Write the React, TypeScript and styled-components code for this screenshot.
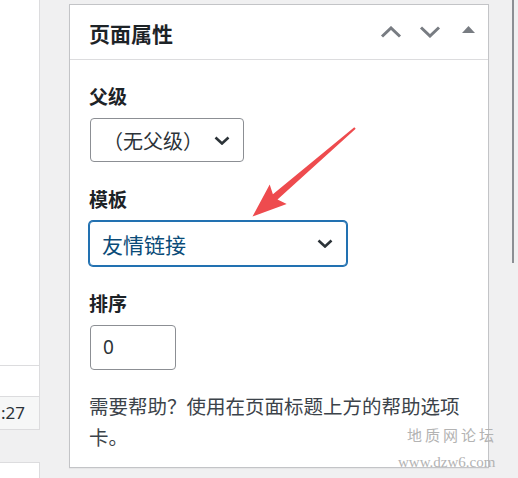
import styled, { createGlobalStyle } from "styled-components";

const GlobalStyle = createGlobalStyle`
  html, body {
    margin: 0;
    padding: 0;
    background: #f0f0f1;
  }
  body {
    font-family: "Noto Sans CJK SC", "Noto Sans", sans-serif;
    color: #1d2327;
  }
`;

const Screen = styled.div`
  position: relative;
  display: flex;
  width: 518px;
  height: 478px;
  overflow: hidden;
  background: #f0f0f1;
`;

/* left: the edge of the post list */
const LeftColumn = styled.div`
  width: 40px;
  flex-shrink: 0;
  display: flex;
  flex-direction: column;
`;

const ListArea = styled.div`
  height: 366px;
  background: #fff;
  border-right: 1px solid #dcdcde;
  border-bottom: 1px solid #dcdcde;
  box-sizing: border-box;
`;

const DateRow = styled.div`
  padding-top: 30px;
  background: #fff;
  border-right: 1px solid #dcdcde;
`;

const DateBox = styled.div`
  height: 34px;
  box-sizing: border-box;
  border-top: 1px solid #dcdcde;
  border-bottom: 1px solid #dcdcde;
  background: #f6f7f7;
  font-family: "Noto Sans", "Liberation Sans", sans-serif;
  font-size: 17px;
  line-height: 32px;
  color: #2c3338;
  padding-left: 1px;
`;

const BottomCard = styled.div`
  flex: 1;
  margin-top: 32px;
  background: #fff;
  border-top: 1px solid #dcdcde;
  border-right: 1px solid #dcdcde;
`;

/* the meta box */
const Panel = styled.section`
  width: 420px;
  height: 464px;
  margin: 4px 0 0 29px;
  flex-shrink: 0;
  box-sizing: border-box;
  border: 1px solid #c3c4c7;
  background: #fff;
  box-shadow: 0 1px 1px rgba(0, 0, 0, 0.04);
`;

const Header = styled.header`
  height: 55px;
  box-sizing: border-box;
  display: flex;
  align-items: center;
  justify-content: space-between;
  padding-left: 19px;
  border-bottom: 1px solid #dcdcde;
`;

const Title = styled.h2`
  margin: 2px 0 0;
  font-size: 21px;
  line-height: 1;
  font-weight: 700;
  color: #1d2327;
`;

const HeaderActions = styled.div`
  display: flex;
  height: 100%;
`;

const IconButton = styled.button`
  width: 39px;
  height: 100%;
  padding: 0;
  border: 0;
  background: none;
  display: flex;
  align-items: center;
  justify-content: center;
  color: #787c82;
`;

const Body = styled.div`
  padding: 22px 19px 0;
`;

const Field = styled.div`
  display: flex;
  flex-direction: column;
  align-items: flex-start;
  gap: 8px;
  & + & {
    margin-top: 23px;
  }
`;

const Label = styled.label`
  font-size: 19px;
  line-height: 28px;
  font-weight: 700;
  color: #1d2327;
`;

const SelectBox = styled.div<{ $width: number; $focused?: boolean }>`
  width: ${(p) => p.$width}px;
  height: ${(p) => (p.$focused ? 45 : 44)}px;
  box-sizing: border-box;
  display: flex;
  align-items: center;
  justify-content: space-between;
  padding: 0 13px 0 12px;
  border: 1px solid ${(p) => (p.$focused ? "#2271b1" : "#8c8f94")};
  border-radius: 4px;
  box-shadow: ${(p) => (p.$focused ? "0 0 0 1px #2271b1" : "none")};
  margin-left: ${(p) => (p.$focused ? 0 : 1)}px;
  font-size: ${(p) => (p.$focused ? 21 : 20)}px;
  color: ${(p) => (p.$focused ? "#0a4b78" : "#2c3338")};
  background: #fff;
`;

const NumberInput = styled.div`
  width: 86px;
  height: 45px;
  box-sizing: border-box;
  margin-left: 1px;
  padding-left: 12px;
  border: 1px solid #8c8f94;
  border-radius: 4px;
  font-family: "Noto Sans", "Liberation Sans", sans-serif;
  font-size: 19px;
  line-height: 43px;
  color: #2c3338;
`;

const HelpText = styled.p`
  margin: 20px 0 0;
  font-size: 19.5px;
  line-height: 31px;
  color: #3c434a;
`;

/* right: scrollbar edge */
const RightStrip = styled.div`
  flex: 1;
  padding-left: 23px;
`;

const ScrollLine = styled.div`
  width: 2px;
  height: 263px;
  background: #8c8f94;
`;

/* overlays */
const ArrowMark = styled.svg`
  position: absolute;
  left: 240px;
  top: 120px;
  pointer-events: none;
`;

const Watermark = styled.div`
  position: absolute;
  left: 398px;
  top: 425px;
  display: flex;
  flex-direction: column;
  align-items: flex-start;
  color: #b3b3b3;
  pointer-events: none;
`;

const WatermarkName = styled.span`
  margin-left: 9px;
  font-family: "Liberation Serif", "Noto Sans CJK SC", serif;
  font-size: 15px;
  line-height: 22px;
  letter-spacing: 3px;
`;

const WatermarkUrl = styled.span`
  font-family: "Liberation Serif", serif;
  font-size: 15px;
  line-height: 20px;
  margin-top: 5px;
`;

const Chevron = ({ up }: { up?: boolean }) => (
  <svg width="22" height="12" viewBox="0 0 22 12">
    <path
      d={up ? "M2 10.5 L11 2 L20 10.5" : "M2 1.5 L11 10 L20 1.5"}
      fill="none"
      stroke="currentColor"
      strokeWidth="3"
    />
  </svg>
);

const Caret = () => (
  <svg width="13" height="8" viewBox="0 0 13 8" style={{ marginBottom: 4 }}>
    <path d="M0 7 L6.5 0 L13 7 Z" fill="currentColor" />
  </svg>
);

const SelectArrow = () => (
  <svg width="16" height="9" viewBox="0 0 16 9">
    <path d="M1.5 1.5 L8 7.5 L14.5 1.5" fill="none" stroke="#2c3338" strokeWidth="2.6" />
  </svg>
);

export default function App() {
  return (
    <>
      <GlobalStyle />
      <Screen>
        <LeftColumn>
          <ListArea />
          <DateRow>
            <DateBox>:27</DateBox>
          </DateRow>
          <BottomCard />
        </LeftColumn>

        <Panel>
          <Header>
            <Title>页面属性</Title>
            <HeaderActions>
              <IconButton aria-label="上移">
                <Chevron up />
              </IconButton>
              <IconButton aria-label="下移">
                <Chevron />
              </IconButton>
              <IconButton aria-label="折叠">
                <Caret />
              </IconButton>
            </HeaderActions>
          </Header>
          <Body>
            <Field>
              <Label>父级</Label>
              <SelectBox $width={154}>
                <span>（无父级）</span>
                <SelectArrow />
              </SelectBox>
            </Field>
            <Field>
              <Label>模板</Label>
              <SelectBox $width={258} $focused>
                <span>友情链接</span>
                <SelectArrow />
              </SelectBox>
            </Field>
            <Field>
              <Label>排序</Label>
              <NumberInput>0</NumberInput>
            </Field>
            <HelpText>需要帮助？使用在页面标题上方的帮助选项卡。</HelpText>
          </Body>
        </Panel>

        <RightStrip>
          <ScrollLine />
        </RightStrip>

        <ArrowMark width="125" height="105" viewBox="0 0 125 105">
          <polygon
            points="12.5,96.5 29.7,64.5 32.9,74.3 114.3,7.2 115.7,8.8 37.5,79.5 46.7,84.1"
            fill="#ee4b4e"
          />
        </ArrowMark>

        <Watermark>
          <WatermarkName>地质网论坛</WatermarkName>
          <WatermarkUrl>www.dzw6.com</WatermarkUrl>
        </Watermark>
      </Screen>
    </>
  );
}
